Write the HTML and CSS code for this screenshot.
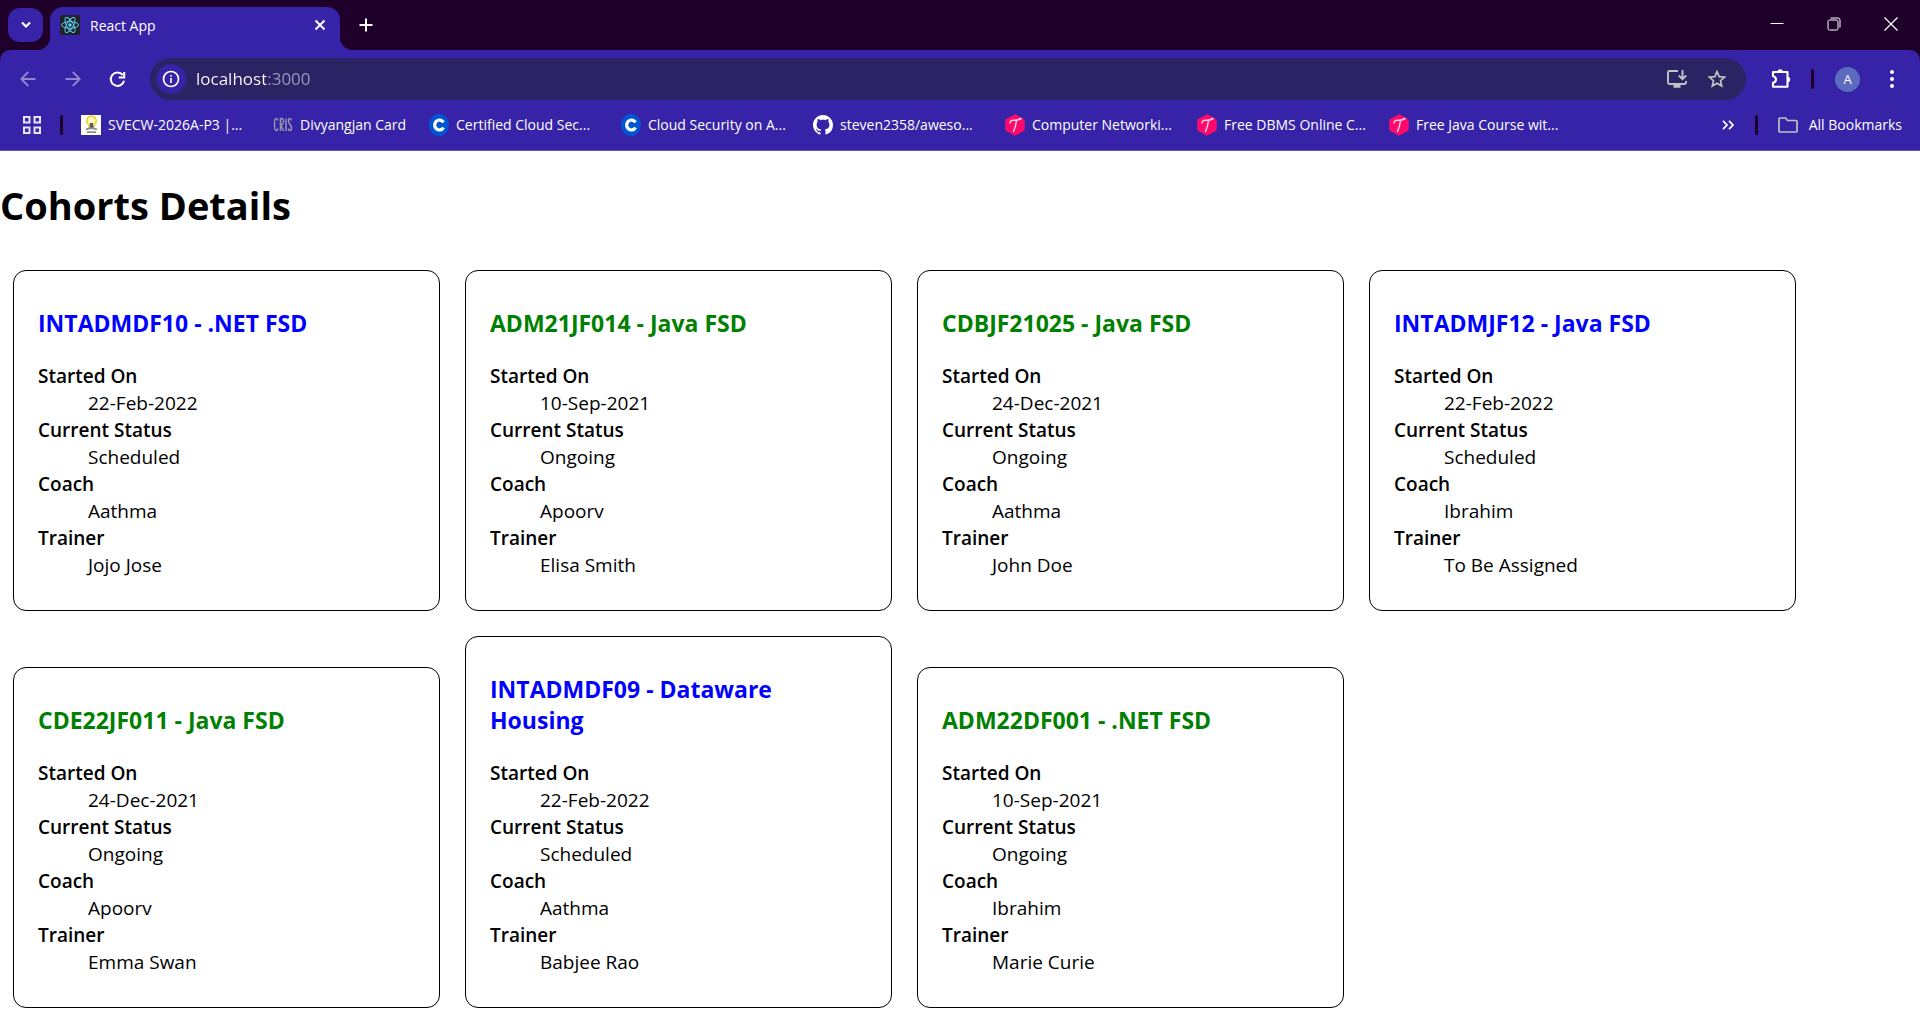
FILE: index.html
```html
<!DOCTYPE html>
<html lang="en">
<head>
<meta charset="utf-8">
<title>React App</title>
<link rel="stylesheet" href="styles.css">
</head>
<body>
<svg class="defs" aria-hidden="true">
  <symbol id="coursera" viewBox="0 0 20 22"><ellipse cx="10" cy="11" rx="10" ry="11" fill="#0056d2"/><path d="M14.500 8.300A4.800 5 0 1 0 14.500 13.700" fill="none" stroke="#fff" stroke-width="3.200"/></symbol>
  <symbol id="turing" viewBox="0 0 20 22"><path d="M10 1l8 4.500q1 .6 1 1.500v8q0 .9-1 1.500l-8 4.500-8-4.500q-1-.6-1-1.500V7q0-.9 1-1.500z" fill="#ff0a6c" stroke="#ff0a6c" stroke-width="1.500"/><path d="M5 9q0-3 4-2.800t7-1.700M11.500 6.500Q11 12 8.500 17.500" fill="none" stroke="#ffd0e2" stroke-width="1.500" stroke-linecap="round"/></symbol>
</svg>
<header class="browser">
  <div class="tabstrip">
    <button class="tab-search" aria-label="Search tabs"><svg width="12" height="8" viewBox="0 0 12 8"><path d="M2 1.500l4 4 4-4" fill="none" stroke="#fff" stroke-width="2.200"/></svg></button>
    <div class="tab">
      <svg width="20" height="20" viewBox="0 0 20 20"><rect width="20" height="20" rx="1.500" fill="#20232a"/><g fill="none" stroke="#61dafb" stroke-width=".9"><ellipse cx="10" cy="10" rx="8.500" ry="3.300"/><ellipse cx="10" cy="10" rx="8.500" ry="3.300" transform="rotate(60 10 10)"/><ellipse cx="10" cy="10" rx="8.500" ry="3.300" transform="rotate(120 10 10)"/></g><circle cx="10" cy="10" r="1.700" fill="#61dafb"/></svg>
      <span class="tab-title">React App</span>
      <button class="icon-btn tab-close" aria-label="Close tab"><svg width="12" height="12" viewBox="0 0 12 12"><path d="M1.500 1.500l9 9m0-9l-9 9" stroke="#fff" stroke-width="1.900"/></svg></button>
    </div>
    <button class="icon-btn new-tab" aria-label="New tab"><svg width="14" height="14" viewBox="0 0 14 14"><path d="M7 .5v13M.5 7h13" stroke="#fff" stroke-width="2"/></svg></button>
    <div class="window-controls">
      <button class="icon-btn" aria-label="Minimize"><svg width="14" height="14" viewBox="0 0 14 14"><path d="M.5 6.500h13" stroke="#fff"/></svg></button>
      <button class="icon-btn" aria-label="Restore"><svg width="14" height="14" viewBox="0 0 14 14" fill="none" stroke="#fff"><rect x="1" y="3" width="10" height="10" rx="1.500"/><path d="M3.500 1H11q2 0 2 2v7.500"/></svg></button>
      <button class="icon-btn" aria-label="Close"><svg width="14" height="14" viewBox="0 0 14 14"><path d="M.5.5l13 13m0-13l-13 13" stroke="#fff" stroke-width="1.300"/></svg></button>
    </div>
  </div>
  <div class="chrome">
    <div class="toolbar">
      <button class="icon-btn nav" aria-label="Back" disabled><svg width="16" height="16" viewBox="0 0 16 16" fill="none" stroke="#9384d0" stroke-width="1.800"><path d="M15.500 8H1.500M8.200 1L1.300 8l6.900 7"/></svg></button>
      <button class="icon-btn nav" aria-label="Forward" disabled><svg width="16" height="16" viewBox="0 0 16 16" fill="none" stroke="#9384d0" stroke-width="1.800"><path d="M.5 8h14M7.800 1l6.900 7-6.900 7"/></svg></button>
      <button class="icon-btn nav" aria-label="Reload"><svg width="17" height="17" viewBox="0 0 17 17"><path d="M13.700 4A6.700 6.700 0 1 0 15 9.700" fill="none" stroke="#fff" stroke-width="2"/><path d="M16.200 1v6.500H9.700V5.500h4.500V1z" fill="#fff"/></svg></button>
      <div class="omnibox">
        <button class="site-info" aria-label="Site information"><svg width="18" height="18" viewBox="0 0 18 18"><circle cx="9" cy="9" r="7.500" fill="none" stroke="#fff" stroke-width="1.700"/><path d="M8.200 8h1.600v5H8.200zM8.200 5h1.600v1.700H8.200z" fill="#fff"/></svg></button>
        <input class="url" type="text" value="localhost:3000" aria-label="Address">
        <button class="icon-btn action" aria-label="Install app"><svg width="22" height="20" viewBox="0 0 22 20" fill="none" stroke="#c5c1c2" stroke-width="1.900"><path d="M12 2H3.500Q2 2 2 3.500v10Q2 15 3.500 15h15q1.500 0 1.500-1.500V12"/><path d="M16.500 1v9M12.800 6.500l3.700 3.700 3.700-3.700"/><path d="M7.500 17h7" stroke-width="3.500"/></svg></button>
        <button class="icon-btn action" aria-label="Bookmark this page"><svg width="20" height="20" viewBox="0 0 20 20"><path d="M10 2.600l2.200 5 5.400.5-4.100 3.600 1.200 5.300-4.700-2.800L5.300 17l1.200-5.300L2.400 8.100l5.400-.5z" fill="none" stroke="#c5c1c2" stroke-width="1.700"/></svg></button>
      </div>
      <button class="icon-btn extensions" aria-label="Extensions"><svg width="22" height="22" viewBox="0 0 22 22"><path d="M3 4h14.500v14.700H3v-4q3-.8 3-3.300T3 8z" fill="none" stroke="#fff" stroke-width="2.100" stroke-linejoin="round"/><path d="M7.500 4a2.700 2.700 0 0 1 5.400 0zM17.500 8.700a2.700 2.700 0 0 1 0 5.400z" fill="#fff"/></svg></button>
      <span class="divider"></span>
      <button class="avatar" aria-label="Profile">A</button>
      <button class="icon-btn menu" aria-label="Menu"><svg width="4" height="18" viewBox="0 0 4 18" fill="#fff"><circle cx="2" cy="2" r="2"/><circle cx="2" cy="9" r="2"/><circle cx="2" cy="16" r="2"/></svg></button>
    </div>
    <nav class="bookmarks" aria-label="Bookmarks">
      <button class="icon-btn apps" aria-label="Tab groups"><svg width="18" height="18" viewBox="0 0 18 18" fill="none" stroke="#e8e4ff" stroke-width="2"><path d="M1 1h5.500v5.500H1zM11.500 1H17v5.500h-5.500zM1 11.500h5.500V17H1zM11.500 11.500H17V17h-5.500z"/></svg></button>
      <span class="divider"></span>
      <div class="links">
        <a href="#"><svg width="20" height="20" viewBox="0 0 20 20"><path fill="#fff" d="M0 0h20v20H0z"/><path d="M10.500 1a4.800 4.800 0 0 1 3 8.500l-1 2.500h-4l-1-2.500a4.800 4.800 0 0 1 3-8.500z" fill="#fff6b8" stroke="#ecd12f" stroke-width="1.500"/><path d="M9 8h3l.5 6h-4z" fill="#55555c"/><path d="M5 14.500q5.500-2.500 11 0M6 17.200h9" fill="none" stroke="#8a8a90" stroke-width="1.800"/></svg>SVECW-2026A-P3 |...</a>
        <a href="#" class="short"><svg width="20" height="20" viewBox="0 0 20 20" fill="none" stroke="#9a93ad" stroke-width="1.500"><path d="M5 5.500Q4.500 3.500 3.200 3.500 1.500 3.500 1.500 9.500t1.700 6Q4.500 15.500 5 13.500M7.500 16V3.500q3-.5 3 3t-3 3.200L10.700 16M13 3.500V16M18.500 5.500Q18 3.500 17 3.500q-1.500 0-1.500 2.500 0 2 1.500 3.500t1.500 3.500q0 2.500-1.500 2.500-1.300 0-1.700-2"/></svg>Divyangjan Card</a>
        <a href="#"><svg width="20" height="22"><use href="#coursera"/></svg>Certified Cloud Sec...</a>
        <a href="#"><svg width="20" height="22"><use href="#coursera"/></svg>Cloud Security on A...</a>
        <a href="#"><svg width="20" height="20" viewBox="0 0 16 16"><path fill="#fff" d="M8 0C3.580 0 0 3.580 0 8c0 3.540 2.290 6.530 5.470 7.590.4.070.55-.17.55-.38 0-.19-.01-.82-.01-1.490-2.010.37-2.530-.49-2.690-.94-.09-.23-.48-.94-.82-1.130-.28-.15-.68-.52-.01-.53.63-.01 1.080.58 1.230.82.72 1.210 1.870.87 2.330.66.07-.52.28-.87.51-1.070-1.780-.2-3.640-.89-3.640-3.950 0-.87.31-1.590.82-2.150-.08-.2-.36-1.020.08-2.120 0 0 .67-.21 2.200.82.64-.18 1.320-.27 2-.27s1.360.09 2 .27c1.530-1.040 2.200-.82 2.200-.82.44 1.100.16 1.920.08 2.120.51.56.82 1.270.82 2.150 0 3.070-1.870 3.750-3.650 3.950.29.25.54.73.54 1.480 0 1.070-.01 1.930-.01 2.200 0 .21.15.46.55.38A8.010 8.010 0 0 0 16 8c0-4.420-3.580-8-8-8z"/></svg>steven2358/aweso...</a>
        <a href="#"><svg width="20" height="22"><use href="#turing"/></svg>Computer Networki...</a>
        <a href="#"><svg width="20" height="22"><use href="#turing"/></svg>Free DBMS Online C...</a>
        <a href="#"><svg width="20" height="22"><use href="#turing"/></svg>Free Java Course wit...</a>
      </div>
      <button class="icon-btn more" aria-label="More bookmarks"><svg width="12" height="10" viewBox="0 0 12 10"><path d="M1 .8L5 5 1 9.200M7 .8L11 5 7 9.200" fill="none" stroke="#fff" stroke-width="1.700"/></svg></button>
      <span class="divider"></span>
      <a href="#" class="all"><svg width="20" height="16" viewBox="0 0 20 16"><path d="M1 2q0-1 1-1h5.500l2 2.500H18q1 0 1 1V14q0 1-1 1H2q-1 0-1-1z" fill="none" stroke="#c5c1c2" stroke-width="1.700"/></svg>All Bookmarks</a>
    </nav>
  </div>
</header>
<main>
  <h1>Cohorts Details</h1>
  <div class="cohorts">
    <article class="card">
      <h3 class="scheduled">INTADMDF10 - .NET FSD</h3>
      <dl><dt>Started On</dt><dd>22-Feb-2022</dd><dt>Current Status</dt><dd>Scheduled</dd><dt>Coach</dt><dd>Aathma</dd><dt>Trainer</dt><dd>Jojo Jose</dd></dl>
    </article>
    <article class="card">
      <h3 class="ongoing">ADM21JF014 - Java FSD</h3>
      <dl><dt>Started On</dt><dd>10-Sep-2021</dd><dt>Current Status</dt><dd>Ongoing</dd><dt>Coach</dt><dd>Apoorv</dd><dt>Trainer</dt><dd>Elisa Smith</dd></dl>
    </article>
    <article class="card">
      <h3 class="ongoing">CDBJF21025 - Java FSD</h3>
      <dl><dt>Started On</dt><dd>24-Dec-2021</dd><dt>Current Status</dt><dd>Ongoing</dd><dt>Coach</dt><dd>Aathma</dd><dt>Trainer</dt><dd>John Doe</dd></dl>
    </article>
    <article class="card">
      <h3 class="scheduled">INTADMJF12 - Java FSD</h3>
      <dl><dt>Started On</dt><dd>22-Feb-2022</dd><dt>Current Status</dt><dd>Scheduled</dd><dt>Coach</dt><dd>Ibrahim</dd><dt>Trainer</dt><dd>To Be Assigned</dd></dl>
    </article>
    <article class="card">
      <h3 class="ongoing">CDE22JF011 - Java FSD</h3>
      <dl><dt>Started On</dt><dd>24-Dec-2021</dd><dt>Current Status</dt><dd>Ongoing</dd><dt>Coach</dt><dd>Apoorv</dd><dt>Trainer</dt><dd>Emma Swan</dd></dl>
    </article>
    <article class="card">
      <h3 class="scheduled">INTADMDF09 - Dataware Housing</h3>
      <dl><dt>Started On</dt><dd>22-Feb-2022</dd><dt>Current Status</dt><dd>Scheduled</dd><dt>Coach</dt><dd>Aathma</dd><dt>Trainer</dt><dd>Babjee Rao</dd></dl>
    </article>
    <article class="card">
      <h3 class="ongoing">ADM22DF001 - .NET FSD</h3>
      <dl><dt>Started On</dt><dd>10-Sep-2021</dd><dt>Current Status</dt><dd>Ongoing</dd><dt>Coach</dt><dd>Ibrahim</dd><dt>Trainer</dt><dd>Marie Curie</dd></dl>
    </article>
  </div>
</main>
</body>
</html>
```
FILE: styles.css
```css
* { box-sizing: border-box; }
body {
  margin: 0;
  background: #fff;
  color: #000;
  font-family: "Open Sans", "Noto Sans", sans-serif;
}
.defs { position: absolute; width: 0; height: 0; }
button { padding: 0; border: 0; background: none; font: inherit; color: inherit; }
svg { display: block; flex: none; }
.icon-btn { display: flex; align-items: center; justify-content: center; flex: none; }

/* Browser frame */
.browser { background: #1f002b; color: #fff; font-size: 14px; }
.tabstrip { display: flex; height: 50px; padding-left: 8px; }
.tab-search {
  display: flex; align-items: center; justify-content: center;
  width: 35px; height: 34px; margin-top: 8px;
  border-radius: 12px; background: #3623a8;
}
.tab {
  position: relative;
  display: flex; align-items: center;
  width: 290px; height: 43px; margin: 7px 0 0 7px; padding: 0 10px 7px;
  border-radius: 13px 13px 0 0; background: #3623a8;
}
.tab::before, .tab::after {
  content: ""; position: absolute; bottom: 0; width: 13px; height: 13px;
}
.tab::before { left: -13px; background: radial-gradient(circle at 0 0, transparent 13px, #3623a8 13px); }
.tab::after { right: -13px; background: radial-gradient(circle at 100% 0, transparent 13px, #3623a8 13px); }
.tab-title { flex: 1; margin-left: 10px; }
.tab-close { width: 20px; height: 20px; }
.new-tab { width: 32px; height: 34px; margin: 8px 0 0 10px; }
.window-controls { display: flex; margin-left: auto; padding-right: 1px; }
.window-controls .icon-btn { width: 57px; height: 48px; }
.chrome {
  border-bottom: 1px solid #6552bd;
  border-radius: 10px 10px 0 0;
  background: #3623a8;
}
.toolbar { display: flex; align-items: center; height: 58px; padding: 0 11px 0 5px; }
.nav { width: 45px; height: 42px; }
.omnibox {
  display: flex; align-items: center; flex: 1;
  height: 42px; margin-left: 10px; padding: 0 9px 0 6px;
  border-radius: 21px; background: #2b2363;
}
.site-info {
  display: flex; align-items: center; justify-content: center;
  width: 30px; height: 30px; border-radius: 50%; background: #3623a8;
}
.url {
  flex: 1; min-width: 0; height: 32px; margin-left: 10px; padding: 0; border: 0; outline: 0;
  font: 17px/32px "Open Sans", "Noto Sans", sans-serif;
  background: linear-gradient(90deg, #fff 70px, #a09bbd 70px);
  background-clip: text; -webkit-background-clip: text;
  color: transparent;
}
.action { width: 40px; height: 40px; }
.extensions { width: 34px; height: 34px; margin-left: 18px; }
.divider { flex: none; width: 3px; height: 20px; border-radius: 2px; background: #1f002b; }
.toolbar .divider { margin: 0 21px 0 13px; }
.avatar {
  width: 25px; height: 25px; border-radius: 50%;
  background: #5c6bc0; font-size: 13px; line-height: 25px; text-align: center;
}
.menu { width: 34px; height: 34px; margin-left: 15px; }
.bookmarks { display: flex; align-items: center; height: 42px; padding: 0 18px 8px 23px; }
.apps + .divider { margin: 0 18px 0 19px; }
.more + .divider { margin: 0 20px 0 21px; }
.links { display: flex; flex: 1; min-width: 0; overflow: hidden; }
.bookmarks a {
  display: flex; align-items: center; gap: 7px; flex: none;
  color: #fff; line-height: 22px; text-decoration: none; white-space: nowrap;
}
.links a { width: 192px; }
.links .short { width: 156px; }
.bookmarks .all { gap: 11px; }

/* Cohorts page */
h1 { margin: 28px 0 38px; font-size: 38px; line-height: 53px; }
.cohorts {
  display: grid; grid-template-columns: repeat(auto-fill, 427px);
  align-items: end; gap: 25px;
  padding: 0 12px 12px 13px;
}
.card { padding: 37px 25px 31px 24px; border: 1px solid #000; border-radius: 13px; }
.card h3 { margin: 0 0 24px; font-size: 23px; line-height: 31px; }
.scheduled { color: #00f; }
.ongoing { color: #008000; }
dl { margin: 0; font-size: 19px; line-height: 27px; }
dt { font-weight: 600; }
dd { margin: 0 0 0 50px; }
```
